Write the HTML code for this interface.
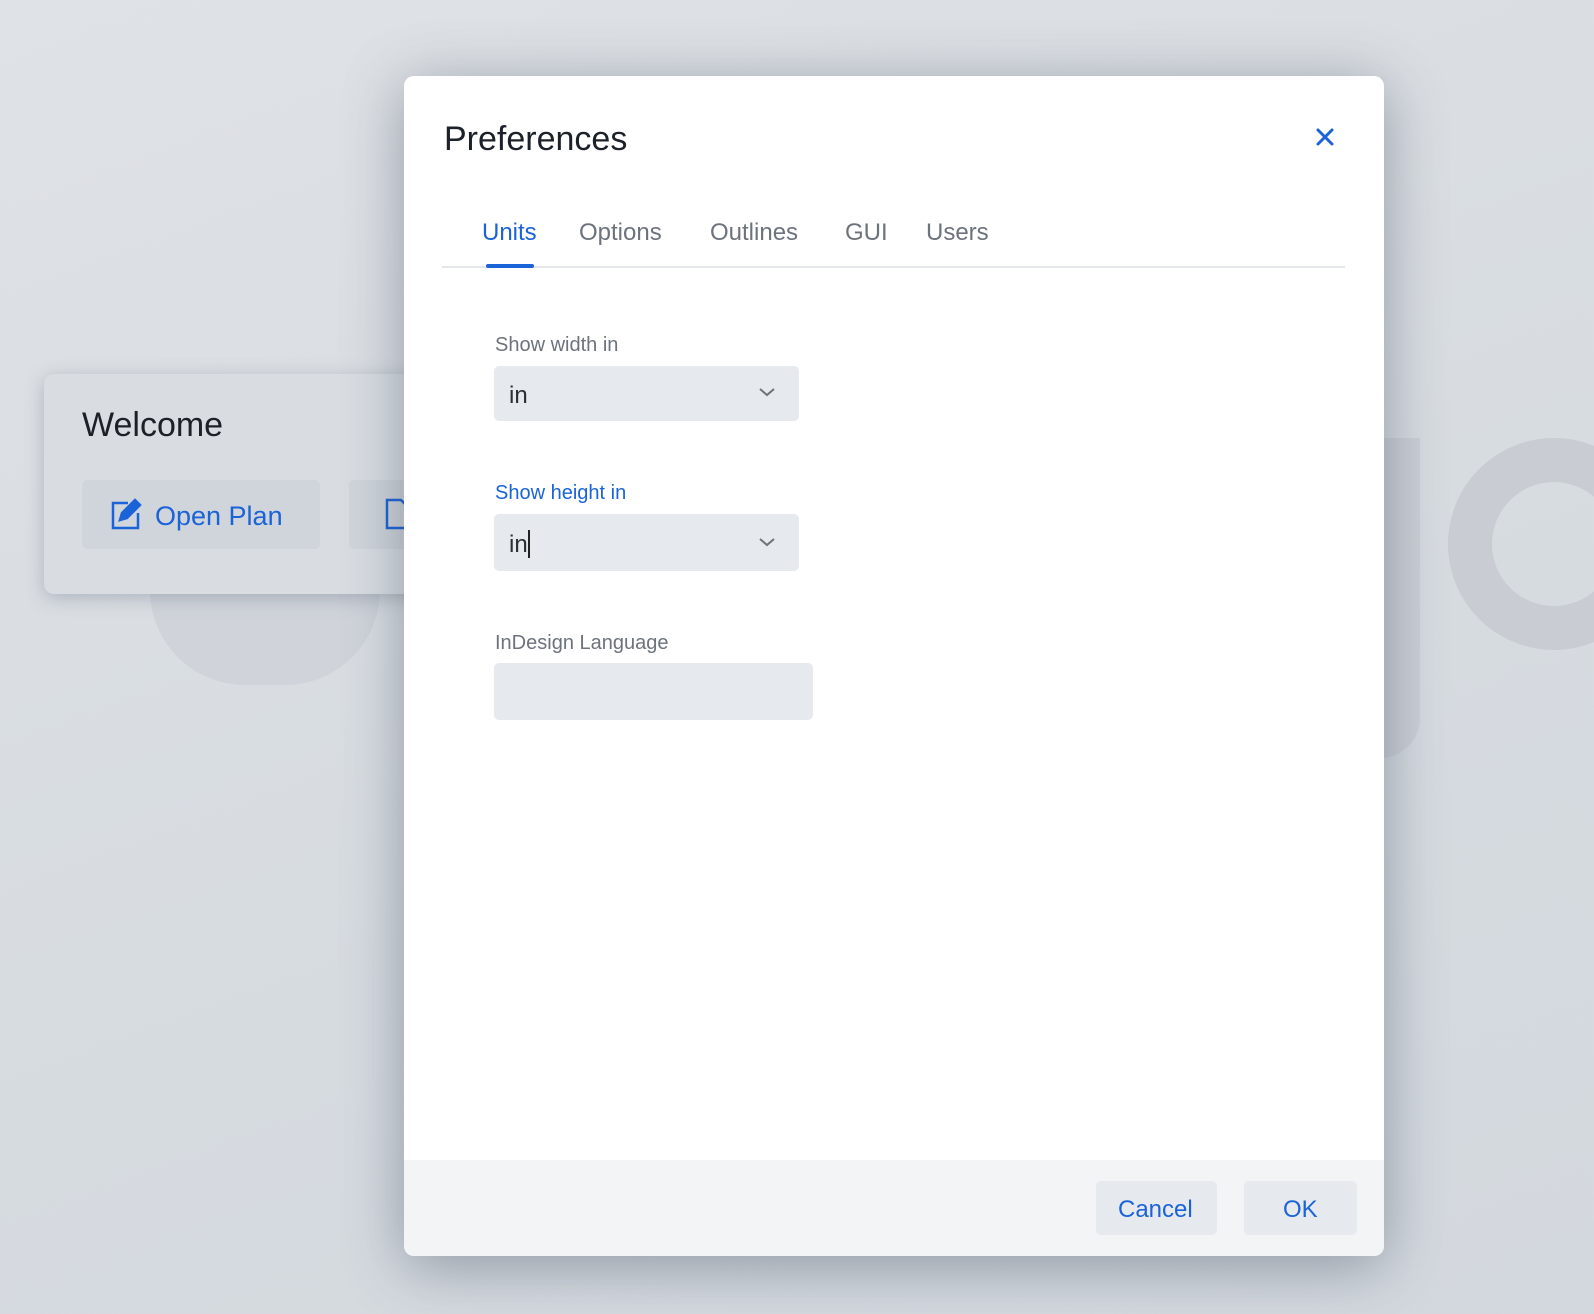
<!DOCTYPE html>
<html><head><meta charset="utf-8"><style>
*{box-sizing:border-box;margin:0;padding:0}
body{width:1594px;height:1314px;overflow:hidden;position:relative;background:linear-gradient(160deg,#dfe2e6 0%,#d6dbe0 60%,#d3d8de 100%);font-family:"Liberation Sans","DejaVu Sans",sans-serif}
.abs{position:absolute}
.card{left:44px;top:374px;width:420px;height:220px;background:#d9dde2;border-radius:10px;box-shadow:0 4px 18px rgba(90,100,120,.35)}
.btn{position:absolute;background:#d0d5db;border-radius:5px;color:#1a63d8;font-size:27px}
.dlg{left:404px;top:76px;width:980px;height:1180px;background:#fff;border-radius:10px;box-shadow:0 10px 60px rgba(60,70,90,.45);overflow:hidden}
.tab{position:absolute;top:143px;font-size:24px;color:#6c737d}
.lbl{position:absolute;font-size:20px;color:#6c737d}
.sel{position:absolute;background:#e6e9ed;border-radius:5px;font-size:24px;color:#2a2f36}
</style></head><body>
<div class="abs" style="left:1370px;top:438px;width:50px;height:320px;background:#c9cdd3;border-radius:0 0 40px 0;opacity:.8"></div>
<div class="abs" style="left:1448px;top:438px;width:212px;height:212px;border-radius:50%;border:44px solid #c9cdd3"></div>
<div class="abs" style="left:150px;top:590px;width:230px;height:95px;border-radius:0 0 115px 115px;background:#d0d4da"></div>
<div class="abs card">
 <div class="abs" style="left:38px;top:32px;font-size:34px;color:#1c2028">Welcome</div>
 <div class="btn" style="left:38px;top:106px;width:238px;height:69px">
  <svg class="abs" style="left:28px;top:18px" width="32" height="32" viewBox="0 0 32 32" fill="none" stroke="#1a63d8" stroke-width="2.5"><path d="M18 5H3v25h25V15"/><path d="M10 22l2-7L25 2l5 5-13 13z" fill="#1a63d8"/></svg>
  <span class="abs" style="left:73px;top:21px">Open Plan</span>
 </div>
 <div class="btn" style="left:305px;top:106px;width:120px;height:69px">
  <svg class="abs" style="left:36px;top:18px" width="26" height="32" viewBox="0 0 26 32" fill="none" stroke="#1a63d8" stroke-width="2.5"><path d="M2 2h14l8 8v20H2z"/></svg>
 </div>
</div>
<div class="abs dlg">
 <div class="abs" style="left:40px;top:44px;font-size:34px;color:#1c2028">Preferences</div>
 <svg class="abs" style="left:911px;top:51px" width="20" height="20" viewBox="0 0 20 20" stroke="#1a63d8" stroke-width="3" stroke-linecap="round"><path d="M3 3l14 14M17 3L3 17"/></svg>
 <div class="tab" style="left:78px;color:#1a63d8">Units</div>
 <div class="tab" style="left:175px">Options</div>
 <div class="tab" style="left:306px">Outlines</div>
 <div class="tab" style="left:441px">GUI</div>
 <div class="tab" style="left:522px">Users</div>
 <div class="abs" style="left:38px;top:190px;width:903px;height:2px;background:#e4e7eb"></div>
 <div class="abs" style="left:82px;top:188px;width:48px;height:4px;background:#1a63d8;border-radius:2px"></div>
 <div class="lbl" style="left:91px;top:258px">Show width in</div>
 <div class="sel" style="left:90px;top:290px;width:305px;height:55px"><span class="abs" style="left:15px;top:16px">in</span>
  <svg class="abs" style="left:264px;top:20px" width="18" height="12" viewBox="0 0 18 12" fill="none" stroke="#6c737d" stroke-width="2"><path d="M2 3l7 6 7-6"/></svg></div>
 <div class="lbl" style="left:91px;top:406px;color:#1a63d8">Show height in</div>
 <div class="sel" style="left:90px;top:438px;width:305px;height:57px"><span class="abs" style="left:15px;top:16px">in<span style="display:inline-block;width:2px;height:28px;background:#222;vertical-align:-6px"></span></span>
  <svg class="abs" style="left:264px;top:22px" width="18" height="12" viewBox="0 0 18 12" fill="none" stroke="#6c737d" stroke-width="2"><path d="M2 3l7 6 7-6"/></svg></div>
 <div class="lbl" style="left:91px;top:556px">InDesign Language</div>
 <div class="sel" style="left:90px;top:587px;width:319px;height:57px"></div>
 <div class="abs" style="left:0;top:1084px;width:980px;height:96px;background:#f2f4f6">
  <div class="btn" style="left:692px;top:21px;width:121px;height:54px;background:#e6e9ed;font-size:24px"><span class="abs" style="left:22px;top:15px">Cancel</span></div>
  <div class="btn" style="left:840px;top:21px;width:113px;height:54px;background:#e6e9ed;font-size:24px"><span class="abs" style="left:39px;top:15px">OK</span></div>
 </div>
</div>
</body></html>
